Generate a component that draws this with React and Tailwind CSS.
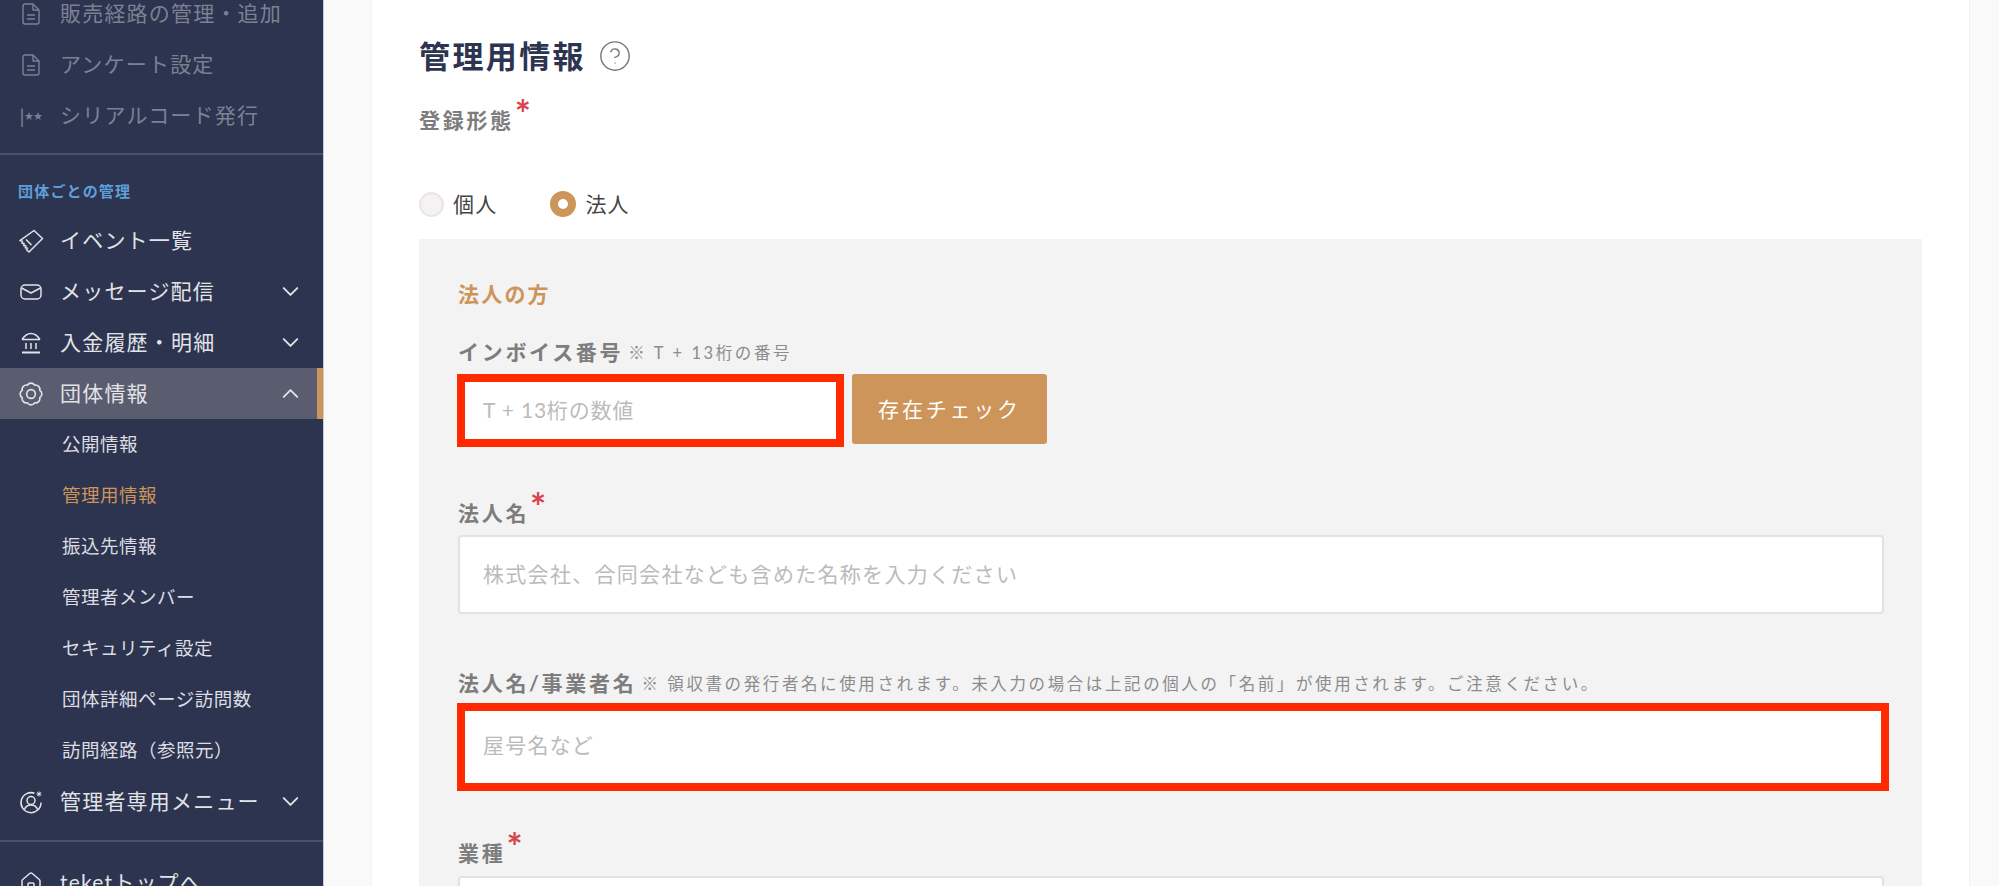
import { ChevronDown, ChevronUp, CircleHelp, House } from "lucide-react";

const fontStack = "font-['Lato','Noto_Sans_CJK_JP',sans-serif]";

function DocIcon() {
  return (
    <svg width="20" height="22" viewBox="0 0 20 22" fill="none" stroke="currentColor" strokeWidth="1.4" strokeLinejoin="round">
      <path d="M2 3a2 2 0 0 1 2-2h8l6 6v12a2 2 0 0 1-2 2H4a2 2 0 0 1-2-2z" />
      <path d="M12 1v6h6M6 12h8M6 16h8" />
    </svg>
  );
}

function TicketIcon() {
  return (
    <svg width="26" height="24" viewBox="0 0 26 24" fill="none" stroke="currentColor" strokeWidth="1.5" strokeLinejoin="round">
      <path d="M16 1.5l8.500 8L11 23l-2.500-2.200 1-1.600-2.200-.4.6-2-2.200-.2.4-2.100-2.100-.2.5-2-2.600-.7z" />
      <path d="M8 10.500l5.500 5.500" />
    </svg>
  );
}

function MailIcon() {
  return (
    <svg width="22" height="16" viewBox="0 0 22 16" fill="none" stroke="currentColor" strokeWidth="1.5" strokeLinejoin="round">
      <rect x="1" y="1" width="20" height="14" rx="4" />
      <path d="M1.500 4l9.500 5 9.500-5" />
    </svg>
  );
}

function BankIcon() {
  return (
    <svg width="22" height="22" viewBox="0 0 22 22" fill="none" stroke="currentColor" strokeWidth="1.5">
      <path d="M2 7.500C5 3 8 1.500 11 1.500S17 3 20 7.500M2 7.500h18" />
      <path d="M6 11v6M11 11v6M16 11v6" />
      <path d="M2 20.500h18" strokeWidth="2" />
    </svg>
  );
}

function GearIcon() {
  return (
    <svg width="26" height="26" viewBox="0 0 24 24" fill="none" stroke="currentColor" strokeWidth="1.5">
      <path d="M3.850 8.620a4 4 0 0 1 4.780-4.770 4 4 0 0 1 6.740 0 4 4 0 0 1 4.780 4.780 4 4 0 0 1 0 6.740 4 4 0 0 1-4.770 4.780 4 4 0 0 1-6.750 0 4 4 0 0 1-4.780-4.770 4 4 0 0 1 0-6.760Z" />
      <circle cx="12" cy="12" r="4" />
    </svg>
  );
}

function AdminIcon() {
  return (
    <svg width="24" height="24" viewBox="0 0 24 24" fill="none" stroke="currentColor" strokeWidth="1.500">
      <path d="M15.500 3.300A10 10 0 1 0 22 12.500" />
      <circle cx="12" cy="10.500" r="4" />
      <path d="M5.500 19.500c1-3 3.500-4.500 6.500-4.500s5.500 1.500 6.500 4.500" />
      <path d="M20 1.500v5M17.500 4h5M18.300 2.300l3.400 3.400M21.700 2.300l-3.400 3.400" strokeWidth="1" />
    </svg>
  );
}

function SerialIcon() {
  return (
    <span className="flex items-center whitespace-nowrap leading-none">
      <span className="text-[20px] font-normal">|</span>
      <span className="text-[9px] tracking-[0px]">★★</span>
    </span>
  );
}

function NavRow({ icon, label, dim, active, open, chevron }) {
  return (
    <div className={`relative flex h-[51px] items-center pl-[17px] pr-[19px] ${active ? "bg-[#5a5d6f]" : ""} ${dim ? "text-[#7c8192]" : "text-[#e2e3e7]"}`}>
      <span className="flex w-[28px] shrink-0 items-center justify-center">{icon}</span>
      <span className="ml-[15px] flex-1 whitespace-nowrap pb-[2px] text-[21px] tracking-[1.200px]">{label}</span>
      {chevron ? (open ? <ChevronUp size={27} strokeWidth={1.7} /> : <ChevronDown size={27} strokeWidth={1.7} />) : null}
      {active ? <span className="absolute inset-y-0 right-0 w-[6px] bg-[#cd955a]" /> : null}
    </div>
  );
}

function SubRow({ label, current }) {
  return (
    <div className={`flex h-[51px] items-center whitespace-nowrap pl-[62px] text-[18.500px] tracking-[0.500px] ${current ? "text-[#cd955a]" : "text-[#dcdde2]"}`}>
      {label}
    </div>
  );
}

function Sidebar() {
  return (
    <aside className="h-[886px] w-[324px] shrink-0 overflow-hidden border-r border-[#c9ccd6] bg-[#2d3450]">
      <div className="-mt-[12px]">
        <NavRow dim icon={<DocIcon />} label="販売経路の管理・追加" />
        <NavRow dim icon={<DocIcon />} label="アンケート設定" />
        <NavRow dim icon={<SerialIcon />} label="シリアルコード発行" />
      </div>
      <div className="mt-[12px] h-[2px] bg-[#4a5068]" />
      <p className="mt-[23px] flex h-[26px] items-center pl-[18px] text-[15px] font-bold tracking-[1.200px] text-[#5f9fd8]">団体ごとの管理</p>
      <div className="mt-[11px]">
        <NavRow icon={<TicketIcon />} label="イベント一覧" />
        <NavRow icon={<MailIcon />} label="メッセージ配信" chevron />
        <NavRow icon={<BankIcon />} label="入金履歴・明細" chevron />
        <NavRow active icon={<GearIcon />} label="団体情報" chevron open />
        <SubRow label="公開情報" />
        <SubRow current label="管理用情報" />
        <SubRow label="振込先情報" />
        <SubRow label="管理者メンバー" />
        <SubRow label="セキュリティ設定" />
        <SubRow label="団体詳細ページ訪問数" />
        <SubRow label="訪問経路（参照元）" />
        <NavRow icon={<AdminIcon />} label="管理者専用メニュー" chevron />
      </div>
      <div className="mt-[13px] h-[2px] bg-[#4a5068]" />
      <div className="mt-[15px]">
        <NavRow icon={<House size={24} strokeWidth={1.5} />} label="teketトップへ" />
      </div>
    </aside>
  );
}

function Required() {
  return <span className="ml-[1px] inline-block text-[38px] leading-none text-[#d9434e] [transform:translateY(-7px)]">*</span>;
}

function FieldLabel({ children, required, note }) {
  return (
    <div className="flex h-[30px] items-center whitespace-nowrap text-[21px] font-bold tracking-[2.700px] text-[#7d7d7d]">
      <span>{children}</span>
      {required ? <Required /> : null}
      {note ? <span className="ml-[5px] pt-[2px] text-[16.500px] font-normal tracking-[2.600px] text-[#8c8c8c]">{note}</span> : null}
    </div>
  );
}

function TextInput({ placeholder, className }) {
  return (
    <input
      readOnly
      placeholder={placeholder}
      className={`block bg-white text-[21px] outline-none placeholder:text-[#bbbbbb] ${className}`}
    />
  );
}

function Radio({ checked, label }) {
  return (
    <div className="flex items-center gap-[9px] text-[21px] tracking-[1.200px] text-[#444444]">
      {checked ? (
        <span className="h-[26px] w-[26px] rounded-full border-[8px] border-[#cd955a] bg-white" />
      ) : (
        <span className="h-[25px] w-[25px] rounded-full border-2 border-[#e6e6e6] bg-[#f6f2f2]" />
      )}
      <span>{label}</span>
    </div>
  );
}

export default function App() {
  return (
    <div className={`flex h-[886px] overflow-hidden bg-[#f9f9f9] ${fontStack}`}>
      <Sidebar />
      <main className="min-w-0 flex-1 pl-[47px] pr-[29px]">
        <section className="h-[886px] overflow-hidden border-l border-r border-[#f2f2f2] bg-white px-[47px] pt-[34px]">
          <div className="flex h-[44px] items-center gap-[12px]">
            <h1 className="whitespace-nowrap text-[31px] font-bold tracking-[2.400px] text-[#2d3450]">管理用情報</h1>
            <CircleHelp size={34} strokeWidth={1} className="text-[#777777]" />
          </div>

          <div className="mt-[27px]">
            <FieldLabel required>登録形態</FieldLabel>
          </div>

          <div className="mt-[56px] flex h-[26px] items-center gap-[53px]">
            <Radio label="個人" />
            <Radio checked label="法人" />
          </div>

          <div className="mt-[22px] bg-[#f3f3f3] pl-[39px] pr-[38px] pt-[40px]">
            <p className="flex h-[30px] items-center text-[21px] font-bold tracking-[2.200px] text-[#cd955a]">法人の方</p>

            <div className="mt-[28px]">
              <FieldLabel note="※ T + 13桁の番号">インボイス番号</FieldLabel>
            </div>
            <div className="-ml-[1px] mt-[7px] flex items-start gap-[8px]">
              <TextInput
                placeholder="T + 13桁の数値"
                className="h-[73px] w-[387px] border-[8px] border-[#ff2a00] pb-[3px] pl-[18px] tracking-[0.800px]"
              />
              <button className="h-[70px] w-[195px] rounded-[3px] bg-[#cd955a] text-[21px] tracking-[2.800px] text-white">存在チェック</button>
            </div>

            <div className="mt-[51px]">
              <FieldLabel required>法人名</FieldLabel>
            </div>
            <TextInput
              placeholder="株式会社、合同会社なども含めた名称を入力ください"
              className="mt-[7px] h-[79px] w-full rounded-[4px] border-2 border-[#e2e2e2] pb-[2px] pl-[23px] tracking-[1.300px]"
            />

            <div className="mt-[54px]">
              <FieldLabel note="※ 領収書の発行者名に使用されます。未入力の場合は上記の個人の「名前」が使用されます。ご注意ください。">法人名/事業者名</FieldLabel>
            </div>
            <div className="-ml-[1px] -mr-[5px] mt-[5px]">
              <TextInput placeholder="屋号名など" className="h-[88px] w-full border-[8px] border-[#ff2a00] pb-[6px] pl-[18px] tracking-[1.200px]" />
            </div>

            <div className="mt-[47px]">
              <FieldLabel required>業種</FieldLabel>
            </div>
            <TextInput className="mt-[8px] h-[78px] w-full rounded-[4px] border-2 border-[#e2e2e2]" />
          </div>
        </section>
      </main>
    </div>
  );
}
